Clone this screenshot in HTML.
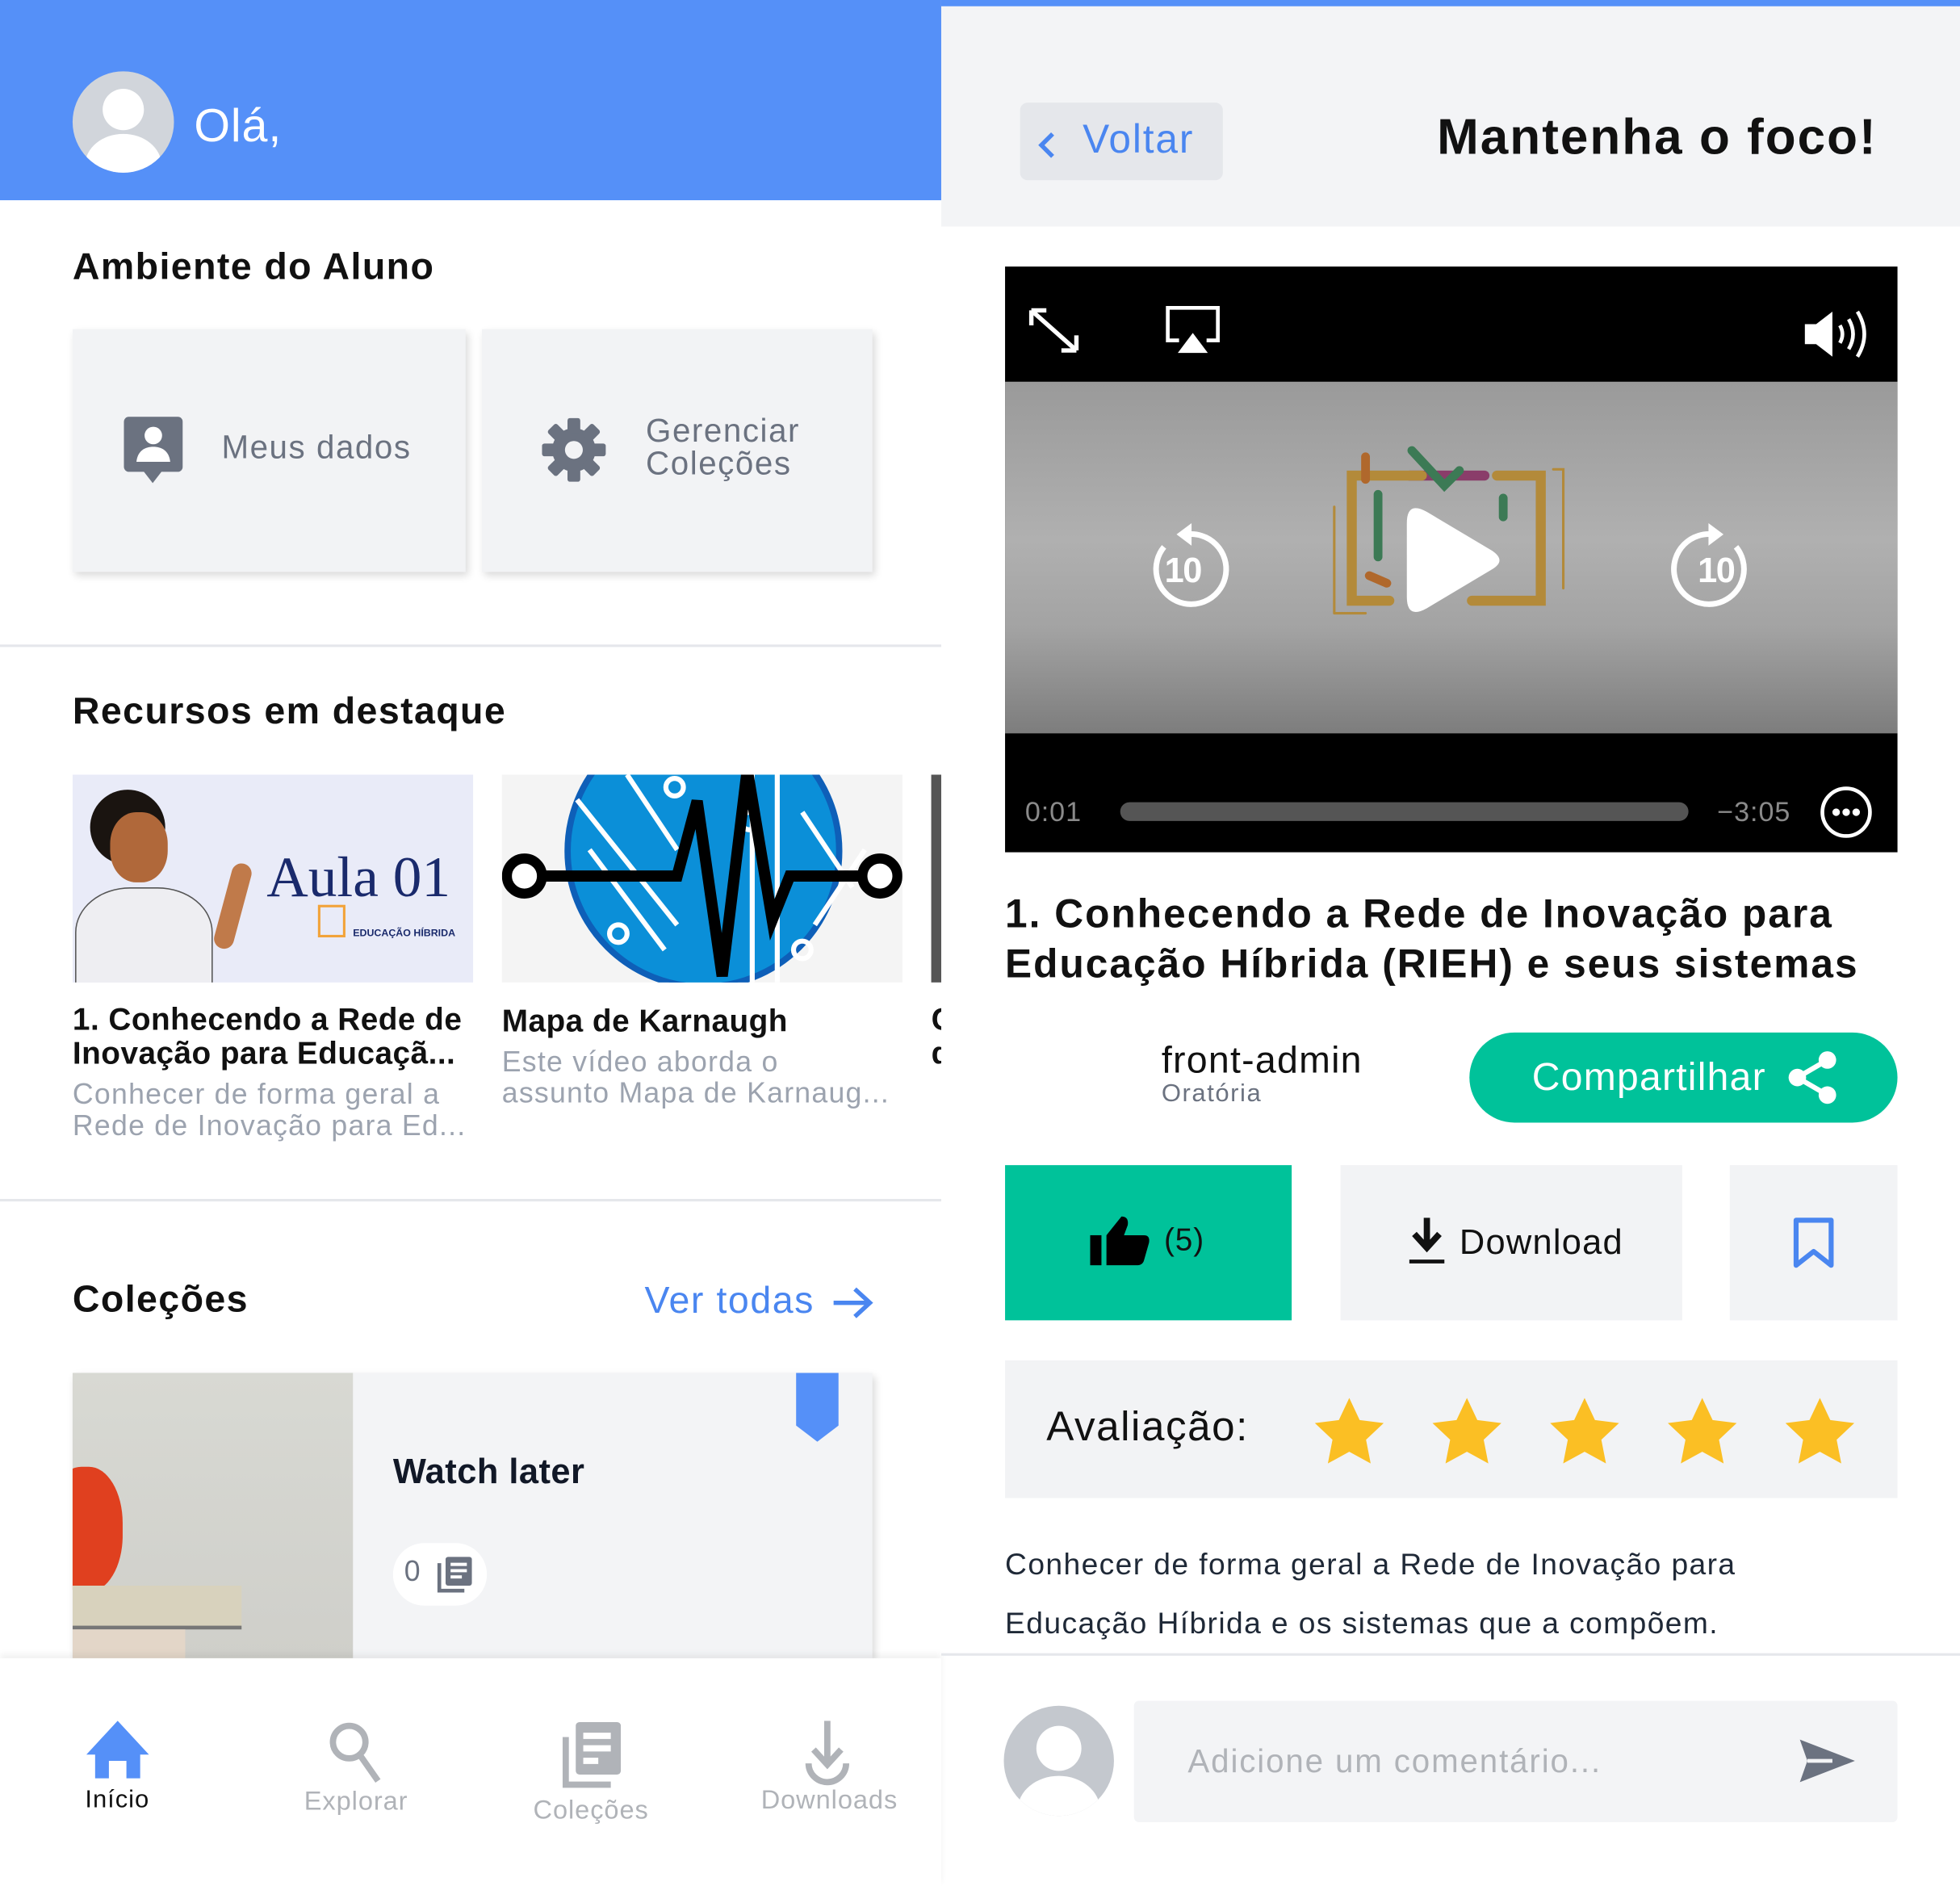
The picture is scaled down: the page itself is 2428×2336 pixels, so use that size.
<!DOCTYPE html>
<html><head><meta charset="utf-8"><style>
*{margin:0;padding:0;box-sizing:border-box}
html,body{width:2428px;height:2336px;overflow:hidden;background:#fff}
#s{position:absolute;left:0;top:0;width:1566px;height:1507px;transform:scale(1.5505,1.5501);transform-origin:0 0;font-family:"Liberation Sans",sans-serif;color:#111;letter-spacing:0.6px}
.a{position:absolute}
.t{position:absolute;white-space:nowrap}
</style></head><body><div id="s">
<!-- LEFT -->
<div class="a" style="left:0;top:0;width:752px;height:160px;background:#5590f8"></div>
<div class="a" style="left:58px;top:57px;width:81px;height:81px;border-radius:50%;background:#d1d5db;overflow:hidden">
 <div class="a" style="left:24px;top:14px;width:33px;height:33px;border-radius:50%;background:#fff"></div>
 <div class="a" style="left:10px;top:50px;width:61px;height:50px;border-radius:50%;background:#fff"></div>
</div>
<div class="t" style="left:155px;top:80px;font-size:37px;color:#fff">Olá,</div>
<div class="t" style="left:58px;top:197px;font-size:30px;font-weight:bold;letter-spacing:0.9px">Ambiente do Aluno</div>
<div class="a" style="left:58px;top:263px;width:314px;height:194px;background:#f2f3f5;box-shadow:2px 3px 6px rgba(0,0,0,.15)"></div>
<div class="a" style="left:385px;top:263px;width:312px;height:194px;background:#f2f3f5;box-shadow:2px 3px 6px rgba(0,0,0,.15)"></div>
<svg class="a" style="left:99px;top:333px" width="47" height="54" viewBox="0 0 47 54"><path d="M4 0h39a4 4 0 0 1 4 4v36a4 4 0 0 1-4 4H30l-7 9-7-9H4a4 4 0 0 1-4-4V4a4 4 0 0 1 4-4z" fill="#6b7280"/><circle cx="23.5" cy="15" r="7" fill="#fff"/><path d="M10 36c1-9 7-12 13.5-12S36 27 37 36z" fill="#fff"/></svg>
<div class="t" style="left:177px;top:342px;font-size:26px;color:#6b7280;letter-spacing:1px">Meus dados</div>
<svg class="a" style="left:433px;top:334px" width="51" height="51" viewBox="-25 -25 50 50"><g fill="#6b7280"><circle r="17"/><g id="tk"><rect x="-5" y="-25" width="10" height="12" rx="2"/></g><use href="#tk" transform="rotate(45)"/><use href="#tk" transform="rotate(90)"/><use href="#tk" transform="rotate(135)"/><use href="#tk" transform="rotate(180)"/><use href="#tk" transform="rotate(225)"/><use href="#tk" transform="rotate(270)"/><use href="#tk" transform="rotate(315)"/></g><circle r="7" fill="#f2f3f5"/></svg>
<div class="t" style="left:516px;top:331px;font-size:26px;color:#6b7280;line-height:26px;letter-spacing:1px">Gerenciar<br>Coleções</div>
<div class="a" style="left:0;top:515px;width:752px;height:2px;background:#e5e7eb"></div>
<div class="t" style="left:58px;top:552px;font-size:30px;font-weight:bold;letter-spacing:0.9px">Recursos em destaque</div>
<!-- img1 -->
<div class="a" style="left:58px;top:619px;width:320px;height:166px;background:#e9ebf8;overflow:hidden">
 <div class="a" style="left:14px;top:12px;width:60px;height:60px;border-radius:50%;background:#1a1410"></div>
 <div class="a" style="left:30px;top:30px;width:46px;height:56px;border-radius:45%;background:#b0683a"></div>
 <div class="a" style="left:2px;top:90px;width:110px;height:90px;border-radius:40% 40% 0 0;background:#eeeef2;border:1px solid #555"></div>
 <div class="a" style="left:120px;top:70px;width:16px;height:70px;border-radius:8px;background:#c07a4a;transform:rotate(15deg)"></div>
 <div class="t" style="left:155px;top:55px;font-family:'Liberation Serif',serif;font-size:46px;color:#1a2a6c;letter-spacing:0">Aula 01</div>
 <div class="t" style="left:224px;top:122px;font-size:8px;font-weight:bold;color:#1a2a6c;letter-spacing:0">EDUCAÇÃO HÍBRIDA</div>
 <div class="a" style="left:196px;top:104px;width:22px;height:26px;border:2px solid #f2a33a"></div>
</div>
<!-- img2 -->
<div class="a" style="left:401px;top:619px;width:320px;height:166px;background:#f4f4f4;overflow:hidden">
 <div class="a" style="left:50px;top:-50px;width:222px;height:222px;border-radius:50%;background:#0b8fd8;border:5px solid #0e5fb8"></div>
 <svg class="a" style="left:0;top:0" width="320" height="166"><g stroke="#fff" stroke-width="4" fill="none"><path d="M60 20l80 100M70 60l60 80M200 0v166M220 0v166M240 30l40 60M250 120l40-60M100 0l40 60"/><circle cx="138" cy="10" r="7"/><circle cx="198" cy="37" r="7"/><circle cx="93" cy="127" r="7"/><circle cx="240" cy="140" r="7"/></g><path d="M18 81H140l16-60 20 140 20-165 20 120 14-35H300" stroke="#000" stroke-width="9" fill="none"/><circle cx="18" cy="81" r="14" fill="#fff" stroke="#000" stroke-width="8"/><circle cx="302" cy="81" r="14" fill="#fff" stroke="#000" stroke-width="8"/></svg>
</div>
<div class="a" style="left:744px;top:619px;width:8px;height:166px;background:#555"></div>
<div class="t" style="left:58px;top:802px;font-size:25px;font-weight:bold;line-height:27px;letter-spacing:0.3px">1. Conhecendo a Rede de<br>Inovação para Educaçã...</div>
<div class="t" style="left:58px;top:862px;font-size:23px;color:#9ca3af;line-height:25px;letter-spacing:0.8px">Conhecer de forma geral a<br>Rede de Inovação para Ed...</div>
<div class="t" style="left:401px;top:802px;font-size:25px;font-weight:bold;letter-spacing:0.3px">Mapa de Karnaugh</div>
<div class="t" style="left:401px;top:836px;font-size:23px;color:#9ca3af;line-height:25px;letter-spacing:0.8px">Este vídeo aborda o<br>assunto Mapa de Karnaug...</div>
<div class="t" style="left:744px;top:802px;font-size:25px;font-weight:bold;line-height:27px;width:8px;overflow:hidden">C<br>d</div>
<div class="a" style="left:0;top:958px;width:752px;height:2px;background:#e5e7eb"></div>
<div class="t" style="left:58px;top:1022px;font-size:30px;font-weight:bold;letter-spacing:0.9px">Coleções</div>
<div class="t" style="left:515px;top:1023px;font-size:30px;color:#4a86f0;letter-spacing:1px">Ver todas</div>
<svg class="a" style="left:664px;top:1027px" width="34" height="28" viewBox="0 0 34 28"><path d="M2 14h29M19 3l12 11-12 11" stroke="#4a86f0" stroke-width="3.5" fill="none"/></svg>
<div class="a" style="left:58px;top:1097px;width:639px;height:228px;background:#f3f4f6;box-shadow:2px 3px 6px rgba(0,0,0,.15)"></div>
<div class="a" style="left:58px;top:1097px;width:224px;height:228px;background:linear-gradient(#d8d9d3,#cfcfca);overflow:hidden">
 <div class="a" style="left:-20px;top:75px;width:60px;height:100px;border-radius:45%;background:#e0401f"></div>
 <div class="a" style="left:0;top:170px;width:135px;height:35px;background:#d8d2bd;border-bottom:3px solid #777"></div>
 <div class="a" style="left:0;top:205px;width:90px;height:30px;background:#e3d6c8"></div>
</div>
<svg class="a" style="left:636px;top:1097px" width="34" height="55" viewBox="0 0 34 55"><path d="M0 0h34v42L17 55 0 42z" fill="#5590f8"/></svg>
<div class="t" style="left:314px;top:1160px;font-size:28px;font-weight:bold;color:#111827;letter-spacing:0.3px">Watch later</div>
<div class="a" style="left:314px;top:1233px;width:75px;height:50px;border-radius:25px;background:#fff"></div>
<div class="t" style="left:323px;top:1242px;font-size:23px;color:#6b7280">0</div>
<svg class="a" style="left:349px;top:1243px" width="29" height="30" viewBox="0 0 29 30"><path d="M2 6v22h20" stroke="#6b7280" stroke-width="3" fill="none"/><rect x="7" y="1" width="21" height="23" rx="2" fill="#6b7280"/><path d="M11 7h13M11 12h13M11 17h9" stroke="#fff" stroke-width="2.5"/></svg>
<div class="a" style="left:0;top:1325px;width:752px;height:182px;background:#fff;box-shadow:0 -3px 5px rgba(0,0,0,.06)"></div>
<svg class="a" style="left:69px;top:1375px" width="50" height="46" viewBox="0 0 50 46"><path d="M25 0L50 27H43v19H32V32H18v14H7V27H0z" fill="#5590f8"/></svg>
<div class="t" style="left:68px;top:1427px;font-size:20px">Início</div>
<svg class="a" style="left:262px;top:1375px" width="46" height="52" viewBox="0 0 46 52"><circle cx="17" cy="17" r="13" stroke="#b0b3b8" stroke-width="5" fill="none"/><path d="M26 28l14 20" stroke="#b0b3b8" stroke-width="5"/></svg>
<div class="t" style="left:243px;top:1428px;font-size:21px;color:#b0b3b8">Explorar</div>
<svg class="a" style="left:448px;top:1375px" width="50" height="55" viewBox="0 0 50 55"><path d="M4 13v38h36" stroke="#b0b3b8" stroke-width="5" fill="none"/><rect x="12" y="1" width="36" height="42" rx="3" fill="#b0b3b8"/><path d="M18 12h22M18 22h22M18 32h12" stroke="#fff" stroke-width="5"/></svg>
<div class="t" style="left:426px;top:1435px;font-size:21px;color:#b0b3b8">Coleções</div>
<svg class="a" style="left:642px;top:1375px" width="38" height="52" viewBox="0 0 38 52"><path d="M19 0v34M8 23l11 12 11-12" stroke="#b0b3b8" stroke-width="5" fill="none"/><path d="M4 34a15 15 0 0 0 30 0" stroke="#b0b3b8" stroke-width="5" fill="none"/></svg>
<div class="t" style="left:608px;top:1427px;font-size:21px;color:#b0b3b8">Downloads</div>
<!-- RIGHT -->
<div class="a" style="left:752px;top:0;width:814px;height:181px;background:#f3f4f6"></div>
<div class="a" style="left:752px;top:0;width:814px;height:5px;background:#5590f8"></div>
<div class="a" style="left:815px;top:82px;width:162px;height:62px;border-radius:6px;background:#e5e7eb"></div>
<svg class="a" style="left:828px;top:104px" width="16" height="24" viewBox="0 0 16 24"><path d="M13 3L4 12l9 9" stroke="#4a86f0" stroke-width="3.5" fill="none"/></svg>
<div class="t" style="left:865px;top:93px;font-size:32px;color:#4a86f0;letter-spacing:1.2px">Voltar</div>
<div class="t" style="right:66px;top:88px;font-size:40px;font-weight:bold;letter-spacing:1.3px">Mantenha o foco!</div>
<div class="a" style="left:803px;top:213px;width:713px;height:468px;background:#000"></div>
<div class="a" style="left:803px;top:305px;width:713px;height:281px;background:linear-gradient(#9a9a9a,#b0b0b0 45%,#a3a3a3 70%,#7d7d7d)"></div>
<svg class="a" style="left:820px;top:244px" width="46" height="40" viewBox="0 0 46 40"><path d="M4 4l36 32M4 4v12M4 4h12M40 36V24M40 36H28" stroke="#fff" stroke-width="3.5" fill="none"/></svg>
<svg class="a" style="left:930px;top:244px" width="46" height="40" viewBox="0 0 46 40"><path d="M12 28H3V2h40v26h-9" stroke="#fff" stroke-width="3" fill="none"/><path d="M23 22l12 16H11z" fill="#fff"/></svg>
<svg class="a" style="left:1440px;top:245px" width="60" height="44" viewBox="0 0 60 44"><path d="M2 14h9l13-10v36L11 30H2z" fill="#fff"/><path d="M30 15q4 7 0 14M37 10q7 12 0 24M44 4q11 18 0 36" stroke="#fff" stroke-width="3" fill="none"/></svg>
<svg class="a" style="left:908px;top:415px" width="75" height="75" viewBox="0 0 75 75"><path d="M22 22A28 28 0 1 0 40 12" stroke="#fff" stroke-width="4.5" fill="none"/><path d="M44 3L32 12l12 9z" fill="#fff"/><text x="37" y="50" font-size="28" font-weight="bold" fill="#fff" text-anchor="middle" font-family="Liberation Sans" letter-spacing="-1">10</text></svg>
<svg class="a" style="left:1334px;top:415px" width="75" height="75" viewBox="0 0 75 75"><path d="M53 22A28 28 0 1 1 35 12" stroke="#fff" stroke-width="4.5" fill="none"/><path d="M31 3l12 9-12 9z" fill="#fff"/><text x="37" y="50" font-size="28" font-weight="bold" fill="#fff" text-anchor="middle" font-family="Liberation Sans" letter-spacing="-1">10</text></svg>
<svg class="a" style="left:1056px;top:350px" width="200" height="150" viewBox="0 0 200 150"><g stroke-linecap="round" fill="none"><path d="M70 30h60" stroke="#8a3d6a" stroke-width="8"/><path d="M80 30H24v100h30M140 30h35v100h-55" stroke="#b38a3a" stroke-width="8"/><path d="M35 15v18M38 110l14 6" stroke="#b0682c" stroke-width="7"/><path d="M72 10l26 28 12-12M45 45v50M145 48v15" stroke="#3c7a55" stroke-width="7"/><path d="M10 140h25M10 55v85M185 25h8v95" stroke="#b38a3a" stroke-width="2"/></g><path d="M68 68q0-18 16-9l52 31q12 8 0 15l-52 31q-16 9-16-9z" fill="#fff"/></svg>
<div class="t" style="left:819px;top:636px;font-size:22px;color:#8a8a8a">0:01</div>
<div class="a" style="left:895px;top:641px;width:454px;height:15px;border-radius:8px;background:#555"></div>
<div class="t" style="left:1372px;top:636px;font-size:22px;color:#8a8a8a">−3:05</div>
<svg class="a" style="left:1453px;top:627px" width="44" height="44" viewBox="0 0 44 44"><circle cx="22" cy="22" r="19" stroke="#fff" stroke-width="3" fill="none"/><circle cx="14" cy="22" r="3" fill="#fff"/><circle cx="22" cy="22" r="3" fill="#fff"/><circle cx="30" cy="22" r="3" fill="#fff"/></svg>
<div class="t" style="left:803px;top:710px;font-size:32px;font-weight:bold;line-height:40px;letter-spacing:1.3px">1. Conhecendo a Rede de Inovação para<br>Educação Híbrida (RIEH) e seus sistemas</div>
<div class="t" style="left:928px;top:831px;font-size:30px;letter-spacing:0.8px">front-admin</div>
<div class="t" style="left:928px;top:863px;font-size:20px;color:#6b7280;letter-spacing:1px">Oratória</div>
<div class="a" style="left:1174px;top:825px;width:342px;height:72px;border-radius:36px;background:#00c29a"></div>
<div class="t" style="left:1224px;top:843px;font-size:31px;color:#fff;letter-spacing:0.8px">Compartilhar</div>
<svg class="a" style="left:1426px;top:838px" width="44" height="46" viewBox="0 0 44 46"><path d="M34 9L10 23l24 14" stroke="#fff" stroke-width="4" fill="none"/><circle cx="34" cy="9" r="7" fill="#fff"/><circle cx="10" cy="23" r="7" fill="#fff"/><circle cx="34" cy="37" r="7" fill="#fff"/></svg>
<div class="a" style="left:803px;top:931px;width:229px;height:124px;background:#00c29a"></div>
<svg class="a" style="left:870px;top:970px" width="50" height="42" viewBox="0 0 50 42"><rect x="1" y="17" width="9" height="24" fill="#000"/><path d="M14 17l12-15q6 0 5 7l-3 8h16q5 0 4 6l-4 14q-1 4-6 4H14z" fill="#000"/></svg>
<div class="t" style="left:930px;top:977px;font-size:25px">(5)</div>
<div class="a" style="left:1071px;top:931px;width:273px;height:124px;background:#f2f3f5"></div>
<svg class="a" style="left:1124px;top:973px" width="32" height="38" viewBox="0 0 32 38"><path d="M16 0v22M6 13l10 11 10-11" stroke="#111" stroke-width="5" fill="none"/><path d="M2 35h28" stroke="#111" stroke-width="3"/></svg>
<div class="t" style="left:1166px;top:977px;font-size:28px;letter-spacing:0.8px">Download</div>
<div class="a" style="left:1382px;top:931px;width:134px;height:124px;background:#f2f3f5"></div>
<svg class="a" style="left:1432px;top:972px" width="34" height="42" viewBox="0 0 34 42"><path d="M3 3h28v36L17 28 3 39z" stroke="#4a86f0" stroke-width="4" fill="none" stroke-linejoin="round"/></svg>
<div class="a" style="left:803px;top:1087px;width:713px;height:110px;background:#f2f3f5"></div>
<div class="t" style="left:836px;top:1121px;font-size:33px;letter-spacing:1px">Avaliação:</div>
<svg class="a" style="left:1045px;top:1115px" width="440" height="58" viewBox="0 0 440 58"><defs><path id="st" d="M29 2l8.3 17.7 19.2 2.4-14.1 13.3 3.7 19L29 45l-17.1 9.4 3.7-19L1.5 22.1l19.2-2.4z" fill="#fbbf24"/></defs><use href="#st" x="4"/><use href="#st" x="98"/><use href="#st" x="192"/><use href="#st" x="286"/><use href="#st" x="380"/></svg>
<div class="t" style="left:803px;top:1227px;font-size:24px;line-height:47px;color:#1f2937;letter-spacing:0.9px">Conhecer de forma geral a Rede de Inovação para<br>Educação Híbrida e os sistemas que a compõem.</div>
<div class="a" style="left:752px;top:1321px;width:814px;height:2px;background:#e5e7eb"></div>
<div class="a" style="left:802px;top:1363px;width:88px;height:88px;border-radius:50%;background:#c4c8ce;overflow:hidden">
 <div class="a" style="left:26px;top:16px;width:36px;height:36px;border-radius:50%;background:#fff"></div>
 <div class="a" style="left:11px;top:56px;width:66px;height:55px;border-radius:50%;background:#fff"></div>
</div>
<div class="a" style="left:906px;top:1359px;width:610px;height:97px;border-radius:4px;background:#f3f4f6"></div>
<div class="t" style="left:949px;top:1392px;font-size:26px;color:#b0b3b8;letter-spacing:1.2px">Adicione um comentário...</div>
<svg class="a" style="left:1436px;top:1388px" width="48" height="38" viewBox="0 0 48 38"><path d="M2 2l44 17L2 36l6-17z" fill="#6b7280"/><path d="M8 19h20" stroke="#f3f4f6" stroke-width="3"/></svg>
</div></body></html>
